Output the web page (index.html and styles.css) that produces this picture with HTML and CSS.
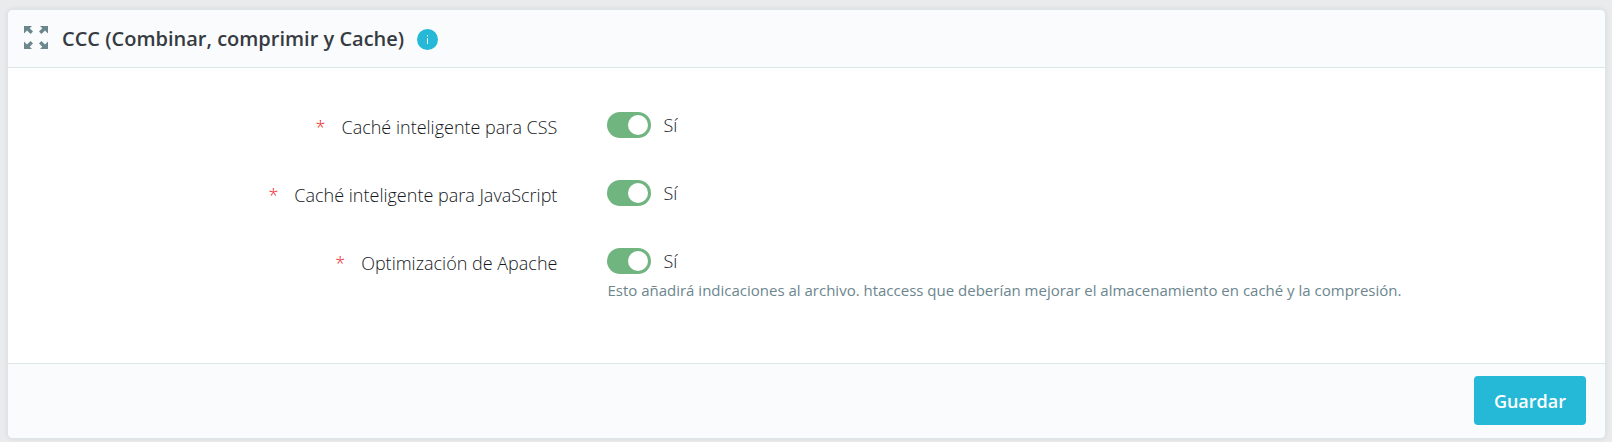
FILE: index.html
```html
<!DOCTYPE html>
<html lang="es">
<head>
    <meta charset="UTF-8">
    <meta name="viewport" content="width=device-width, initial-scale=1.0">
    <title>CCC (Combinar, comprimir y Cache)</title>
    <link rel="stylesheet" href="styles.css">
</head>
<body>
    <form class="card">
        <!-- Cabecera -->
        <div class="card-header">
            <svg class="header-icon" viewBox="0 0 24 24" aria-hidden="true">
                <path d="M0 0h8L5.700 2.300 9 5.600 6.600 8 3 4.600 0 7.500z"/>
                <path d="M24 0v7.500L21 4.600 17.400 8 15 5.600 18.300 2.300 16 0z"/>
                <path d="M0 23v-7.500L3 18.400 6.600 15 9 17.400 5.700 20.700 8 23z"/>
                <path d="M24 23h-8L18.300 20.700 15 17.400 17.400 15 21 18.400 24 15.500z"/>
            </svg>
            <h3 class="card-title">CCC (Combinar, comprimir y Cache)</h3>
            <button type="button" class="help-box" aria-label="Ayuda">
                <svg viewBox="0 0 21 21" aria-hidden="true">
                    <circle cx="10.500" cy="10.500" r="10.500"/>
                    <path d="M10 6h1v1.500h-1zM10 9h1v6h-1z"/>
                </svg>
            </button>
        </div>

        <!-- Opciones -->
        <div class="card-body">
            <div class="form-group">
                <label class="form-label" for="smart-cache-css"><span class="required">*</span>Caché inteligente para CSS</label>
                <div class="form-field">
                    <div class="switch">
                        <input type="checkbox" role="switch" id="smart-cache-css" checked>
                        <label for="smart-cache-css">Sí</label>
                    </div>
                </div>
            </div>
            <div class="form-group">
                <label class="form-label" for="smart-cache-js"><span class="required">*</span>Caché inteligente para JavaScript</label>
                <div class="form-field">
                    <div class="switch">
                        <input type="checkbox" role="switch" id="smart-cache-js" checked>
                        <label for="smart-cache-js">Sí</label>
                    </div>
                </div>
            </div>
            <div class="form-group">
                <label class="form-label" for="apache-optimization"><span class="required">*</span>Optimización de Apache</label>
                <div class="form-field">
                    <div class="switch">
                        <input type="checkbox" role="switch" id="apache-optimization" checked>
                        <label for="apache-optimization">Sí</label>
                    </div>
                    <small class="form-text">Esto añadirá indicaciones al archivo. htaccess que deberían mejorar el almacenamiento en caché y la compresión.</small>
                </div>
            </div>
        </div>

        <!-- Pie -->
        <div class="card-footer">
            <button type="submit" class="btn-primary">Guardar</button>
        </div>
    </form>
</body>
</html>
```
FILE: styles.css
```css
* {
    box-sizing: border-box;
}

body {
    margin: 0;
    padding: 9px 6px 4px 7px;
    background: #eaebec;
    color: #363a41;
    font-family: "Open Sans", sans-serif;
    font-size: 18px;
    line-height: 24px;
}

.card {
    background: #fff;
    border: 1px solid #dbe6e9;
    border-radius: 6px;
    box-shadow: 0 0 5px rgba(0, 0, 0, 0.08);
    overflow: hidden;
}

/* Cabecera */
.card-header {
    display: flex;
    align-items: center;
    padding: 16px 16px 15px;
    background: #fafbfc;
    border-bottom: 1px solid #dbe6e9;
}

.header-icon {
    width: 24px;
    height: 24px;
    margin: 0 14px 2px 0;
    fill: #6c868e;
}

.card-title {
    margin: 0;
    font-size: 20px;
    font-weight: 600;
}

.help-box {
    width: 21px;
    height: 21px;
    margin-left: 13px;
    padding: 0;
    border: 0;
    background: none;
    cursor: pointer;
}

.help-box svg {
    display: block;
    fill: #25b9d7;
}

.help-box path {
    fill: #fff;
}

/* Opciones */
.card-body {
    padding: 44px 16px 47px 18px;
}

.form-group {
    display: grid;
    grid-template-columns: 34% 1fr;
    column-gap: 50px;
    min-height: 68px;
}

.form-label {
    padding-top: 3px;
    color: #14171c;
    font-weight: 300;
    text-align: right;
}

.required {
    margin-right: 16px;
    color: #f01818;
}

.switch {
    display: flex;
    align-items: center;
    gap: 12px;
    color: #14171c;
    font-weight: 300;
}

.switch input {
    width: 44px;
    height: 26px;
    margin: 0;
    padding: 3px;
    appearance: none;
    background: #bbcdd2;
    border-radius: 13px;
    cursor: pointer;
}

.switch input::before {
    content: "";
    display: block;
    width: 20px;
    height: 20px;
    background: #fff;
    border-radius: 50%;
}

.switch input:checked {
    background: #70b580;
}

.switch input:checked::before {
    margin-left: auto;
}

.form-text {
    display: block;
    margin-top: 4px;
    color: #6c868e;
    font-size: 15px;
}

/* Pie */
.card-footer {
    display: flex;
    justify-content: flex-end;
    padding: 12px 19px 13px;
    background: #fafbfc;
    border-top: 1px solid #dbe6e9;
}

.btn-primary {
    padding: 13px 20px 12px;
    border: 0;
    border-radius: 4px;
    background: #25b9d7;
    color: #fff;
    font: inherit;
    font-weight: 600;
    cursor: pointer;
}

.btn-primary:hover {
    background: #1f9db6;
}
```
